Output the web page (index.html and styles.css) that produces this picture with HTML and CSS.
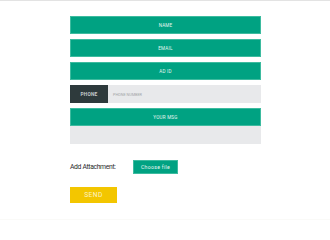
FILE: index.html
```html
<!DOCTYPE html>
<html>
<head>
<meta charset="utf-8">
<link rel="stylesheet" href="styles.css">
</head>
<body>
<div class="page">
  <form class="form">
    <div class="field teal">NAME</div>
    <div class="field teal">EMAIL</div>
    <div class="field teal">AD ID</div>
    <div class="phone">
      <div class="phone-label">PHONE</div>
      <div class="phone-input">PHONE NUMBER</div>
    </div>
    <div class="msg">
      <div class="field teal">YOUR MSG</div>
      <div class="textarea"></div>
    </div>
    <div class="attach">
      <span class="attach-label">Add Attachment:</span>
      <span class="choose">Choose file</span>
    </div>
    <div class="send">SEND</div>
  </form>
</div>
</body>
</html>
```
FILE: styles.css
```css
html, body {
  margin: 0;
  padding: 0;
  background: #fff;
}
.page {
  width: 330px;
  height: 220px;
  box-sizing: border-box;
  border-top: 1px solid #e3e3e3;
  border-bottom: 1px solid #fafaf8;
  font-family: Roboto, "Open Sans", sans-serif;
}
.form {
  margin: 0 0 0 70px;
  padding-top: 15px;
  width: 191px;
  display: flex;
  flex-direction: column;
  gap: 5px;
}
.field {
  height: 18px;
  box-sizing: border-box;
  display: flex;
  align-items: center;
  justify-content: center;
  font-size: 4.6px;
  letter-spacing: 0.2px;
  color: #e6f6f1;
}
.teal {
  background: #00a282;
  border: 1px solid #3dbb9f;
}
.phone {
  display: flex;
  height: 18px;
}
.phone-label {
  width: 38px;
  background: #2e3a3c;
  color: #c6cbcc;
  font-size: 4.8px;
  font-weight: bold;
  letter-spacing: 0.2px;
  display: flex;
  align-items: center;
  justify-content: center;
}
.phone-input {
  flex: 1;
  background: #e8e9eb;
  color: #a3a6a8;
  font-size: 3.8px;
  display: flex;
  align-items: center;
  padding-left: 5px;
}
.msg {
  display: flex;
  flex-direction: column;
}
.textarea {
  height: 18px;
  background: #e8e9eb;
}
.attach {
  display: flex;
  align-items: center;
  margin-top: 11px;
  height: 14px;
}
.attach-label {
  width: 63px;
  font-size: 6.8px;
  color: #2a2a2a;
  letter-spacing: -0.35px;
}
.choose {
  width: 45px;
  height: 14px;
  box-sizing: border-box;
  background: #00a282;
  border: 1px solid #3dbb9f;
  color: #e8f6f2;
  font-size: 5.2px;
  letter-spacing: 0.3px;
  display: flex;
  align-items: center;
  justify-content: center;
}
.send {
  margin-top: 8px;
  width: 47px;
  height: 16px;
  background: #f3c600;
  color: #fdf3c8;
  font-size: 6.6px;
  letter-spacing: 0.5px;
  display: flex;
  align-items: center;
  justify-content: center;
}
```
